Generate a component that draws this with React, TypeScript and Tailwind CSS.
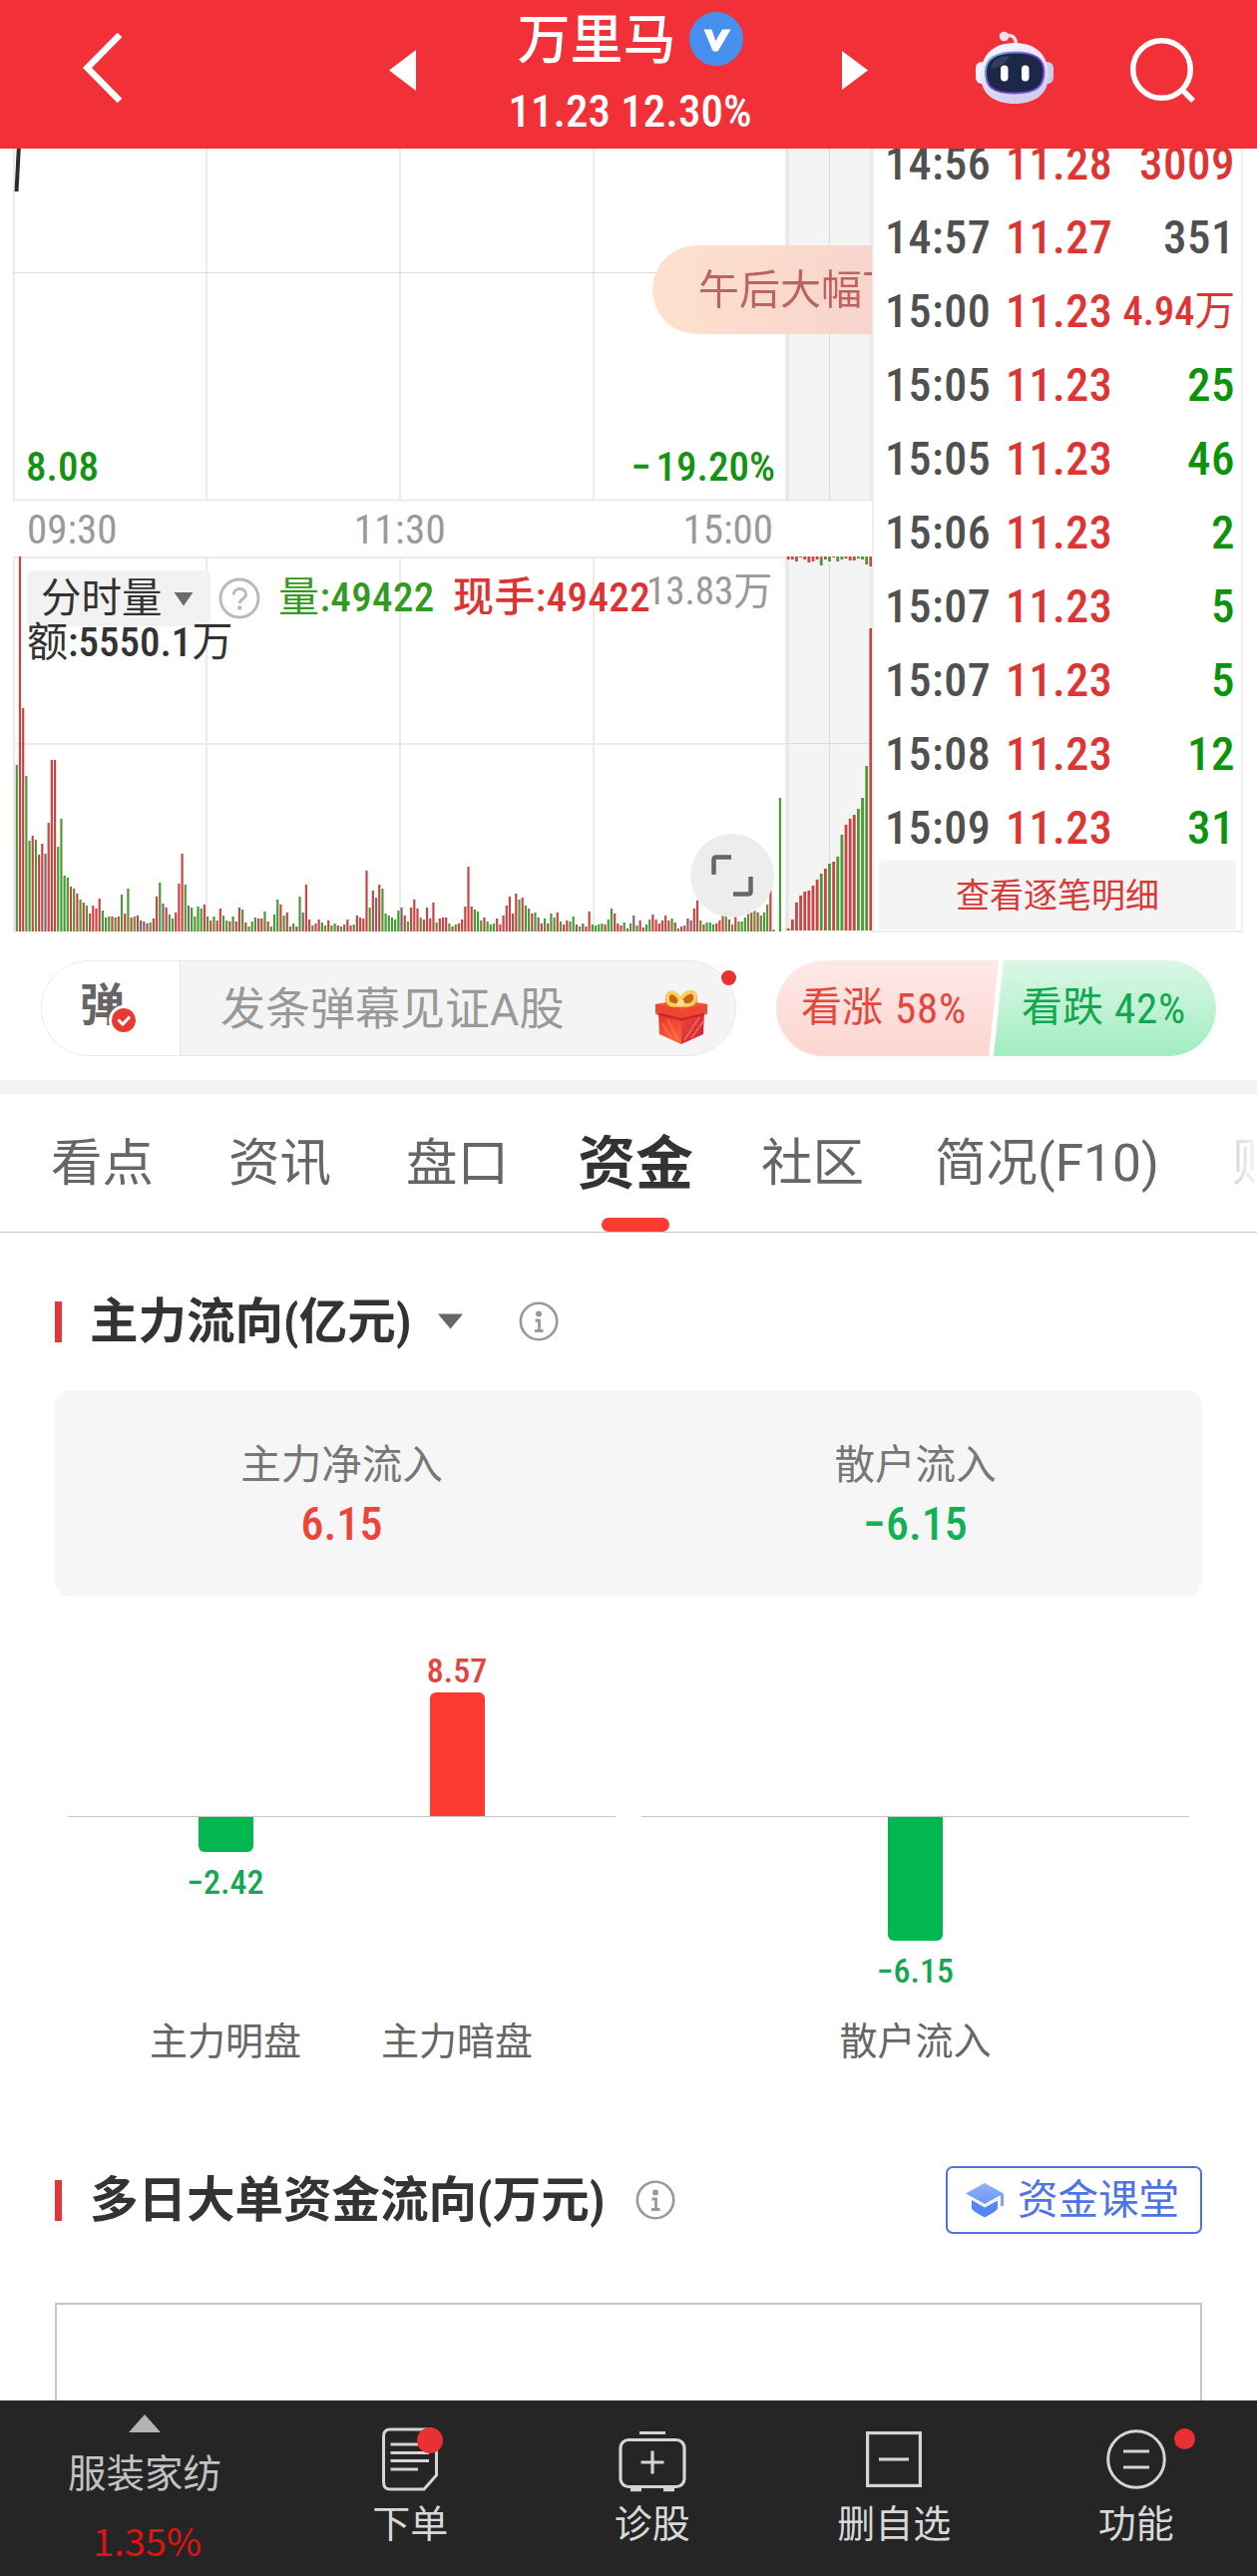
import type { ReactNode } from "react";

type Trade = { time: string; price: string; volume: string; tone: "up" | "down" | "flat" };

const trades: Trade[] = [
  { time: "14:56", price: "11.28", volume: "3009", tone: "up" },
  { time: "14:57", price: "11.27", volume: "351", tone: "flat" },
  { time: "15:00", price: "11.23", volume: "4.94万", tone: "up" },
  { time: "15:05", price: "11.23", volume: "25", tone: "down" },
  { time: "15:05", price: "11.23", volume: "46", tone: "down" },
  { time: "15:06", price: "11.23", volume: "2", tone: "down" },
  { time: "15:07", price: "11.23", volume: "5", tone: "down" },
  { time: "15:07", price: "11.23", volume: "5", tone: "down" },
  { time: "15:08", price: "11.23", volume: "12", tone: "down" },
  { time: "15:09", price: "11.23", volume: "31", tone: "down" },
];

// Per-minute volume: colour key (r = rise, g = fall, k = unchanged) and bar height.
const minuteVolume = `g167 r376 r224 g156 g91 r96 g92 r77 r88 k78 r109 r172 r172 g85 g113 g56 g54 r45 g43 r38 g32 r29 g26 r18 r26 r23 r33 g21 g14 g15
r15 g14 r15 g37 r18 g43 r14 g15 r16 k11 k10 r8 g9 r13 r35 g49 k28 r24 g17 g13 r19 r48 r78 g47 k26 g24 g15 g25 g23 r27
g15 r11 g15 r11 r23 g16 g11 r10 g15 r10 r24 g22 r9 g5 g10 g14 r13 r13 g20 r10 g5 g17 g32 r27 g16 r19 k5 g8 r5 g35
k19 r47 r12 g6 r8 r12 g9 g6 r11 g6 g8 r6 g5 k7 r12 r6 g7 r16 r14 r13 r61 g24 r41 k34 r47 g43 g18 g16 g14 g12
g21 k24 r16 g10 r24 r32 r23 g14 r12 r24 r13 r29 g9 r13 r14 r14 g8 r5 g7 r8 r12 r25 r65 r25 g22 g20 g11 r14 g10 g7
g8 r13 r7 r16 r26 r35 r18 r38 g32 r34 g26 g23 r18 g19 k14 r8 g13 r8 g18 g14 r19 g10 r7 r11 g10 g15 r7 g5 k8 r5
r20 g7 g6 g7 g8 r7 g12 g23 r18 r8 r6 g9 r3 g8 k16 g6 r11 r4 g7 g12 r17 r12 r8 r11 r16 r11 g13 r9 g3 r5
k6 r13 k11 r23 r31 g11 r7 g9 g9 g7 r8 r11 r17 g18 r12 g7 r15 g10 g10 g14 g22 r19 g21 r19 g16 g19 g27 r41 g2 g0 g134`
  .split(/\s+/)
  .map((bar) => ({ tone: bar[0], height: Number(bar.slice(1)) }));

const auctionVolume = "r2 r11 r28 r35 r39 r40 r45 r51 g57 r62 g67 r69 g74 g96 r106 r112 r116 g122 g133 g165 r303"
  .split(" ")
  .map((bar) => ({ tone: bar[0], height: Number(bar.slice(1)) }));

const auctionUnmatched = "r3 r3 r5 r1 r3 r6 r5 r3 g9 r3 g5 r1 g5 g3 r2 r4 r4 g2 g3 g8 r10"
  .split(" ")
  .map((bar) => ({ tone: bar[0], height: Number(bar.slice(1)) }));

const barFill: Record<string, string> = { r: "#cb4444", g: "#4a9a35", k: "#77696c" };

function ChartCanvas() {
  return (
    <svg className="absolute inset-0" width="874" height="786" viewBox="0 149 874 786">
      <rect x="788" y="149" width="86" height="352" fill="#f4f4f4" />
      <rect x="788" y="558" width="86" height="376" fill="#f4f4f4" />
      <g stroke="#ebebeb" strokeWidth="2">
        <path d="M14 149V502M207 149V502M401 149V502M595 149V502M873 149V502" />
        <path d="M13 501.5H874M13 559H788" />
        <path d="M14 558V934M207 558V934M401 558V934M595 558V934M873 558V934M13 746H788" />
      </g>
      <path d="M789 149V502M789 558V934" stroke="#e9e9e9" strokeWidth="4" />
      <path d="M13 273.5H874M788 745.5H874M831.5 149V501M831.5 558V934" stroke="#dcdcdc" strokeWidth="1.2" />
      <path d="M19 145L16.5 192" stroke="#2c2c2c" strokeWidth="4" />
      {minuteVolume.map((bar, i) => (
        <rect key={i} x={15.7 + i * 3.188} y={934 - bar.height} width="2.2" height={bar.height} fill={barFill[bar.tone]} />
      ))}
      {auctionVolume.map((bar, i) => (
        <rect key={i} x={788.8 + i * 4.13} y={933 - bar.height} width="2.8" height={bar.height} fill={barFill[bar.tone]} />
      ))}
      {auctionUnmatched.map((bar, i) => (
        <rect key={i} x={788.8 + i * 4.13} y={558} width="2.8" height={bar.height} fill={barFill[bar.tone]} />
      ))}
    </svg>
  );
}

function Header() {
  return (
    <header className="flex h-[149px] shrink-0 items-start bg-[#f13037] text-white">
      <svg className="mt-[30px] ml-[80px]" width="46" height="76" viewBox="80 30 46 76" fill="none">
        <path d="M120 35L87.5 68L120 101" stroke="#fff" strokeWidth="6.5" />
      </svg>
      <svg className="mt-[50px] ml-[264px]" width="27" height="41" viewBox="0 0 27 41">
        <path d="M0 20.5L27 0V41Z" fill="#fff" />
      </svg>
      <div className="ml-[93px] flex w-[243px] flex-col items-center">
        <div className="mt-[9px] flex h-[64px] items-center">
          <span className="text-[53px] leading-[64px] font-medium">万里马</span>
          <svg className="mb-[5px] ml-[13px]" width="54" height="54" viewBox="0 0 54 54">
            <circle cx="27" cy="27" r="27" fill="#4790ee" />
            <path d="M14.500 17.500L22.500 17.500L26.300 29L33 17.500H41.500L29.500 38C28.300 40.300 24 40.300 23 38Z" fill="#fff" />
          </svg>
        </div>
        <div className="mt-[17px] text-[45px] leading-[44px] font-medium whitespace-nowrap">11.23 12.30%</div>
      </div>
      <svg className="mt-[51px] ml-[91px]" width="26" height="39" viewBox="0 0 26 39">
        <path d="M26 19.500L0 0V39Z" fill="#fff" />
      </svg>
      <RobotIcon />
      <svg className="mt-[34px] ml-[74px]" width="74" height="74" viewBox="1130 34 74 74" fill="none" stroke="#fff" strokeWidth="5.5">
        <circle cx="1164.500" cy="69.500" r="28.800" />
        <path d="M1184 89L1196 101" />
      </svg>
    </header>
  );
}

function RobotIcon() {
  return (
    <svg className="mt-[28px] ml-[104px]" width="82" height="80" viewBox="974 28 82 80">
      <defs>
        <linearGradient id="shell" x1="0" y1="0" x2="0.4" y2="1">
          <stop offset="0" stopColor="#fdfcff" />
          <stop offset="0.55" stopColor="#e6e2f8" />
          <stop offset="1" stopColor="#d3cdf0" />
        </linearGradient>
        <linearGradient id="rim" x1="0" y1="0" x2="1" y2="1">
          <stop offset="0" stopColor="#6bd5e8" />
          <stop offset="0.45" stopColor="#7a3cd8" />
          <stop offset="1" stopColor="#6c63e8" />
        </linearGradient>
      </defs>
      <path d="M1007 36Q1018 33 1018.500 45" stroke="#f3dbe8" strokeWidth="3.500" fill="none" />
      <circle cx="1006.500" cy="36.500" r="4.800" fill="#f7dfe8" />
      <rect x="978" y="62" width="12" height="22" rx="6" fill="#f1effb" />
      <rect x="1044" y="62" width="12" height="22" rx="6" fill="#cbc9ee" />
      <path d="M1017 43C1040 43 1051 57 1051 75C1051 95 1037 104 1017 104C997 104 983 95 983 75C983 57 994 43 1017 43Z" fill="url(#shell)" />
      <path d="M1017 52.500C1038 52.500 1046.500 59 1046.500 72C1046.500 86 1040 93.500 1017 93.500C994 93.500 988 86 988 72C988 59 997 52.500 1017 52.500Z" fill="#1d2748" stroke="url(#rim)" strokeWidth="2" />
      <path d="M993 69C995 59 1002 56 1012 56C1007 66 1001 67 993 69Z" fill="#3b4563" opacity="0.8" />
      <rect x="1003" y="65.500" width="7.500" height="16" rx="3.700" fill="#fff" />
      <rect x="1024" y="65.500" width="7.500" height="16" rx="3.700" fill="#fff" />
    </svg>
  );
}

function TradeRow({ trade }: { trade: Trade }) {
  const tone = trade.tone === "up" ? "text-[#dd3534]" : trade.tone === "down" ? "text-[#0b930b]" : "text-[#505050]";
  const size = trade.volume.endsWith("万") ? "text-[40.5px]" : "text-[47px] tracking-[0.5px]";
  return (
    <div className="flex h-[74px] items-center text-[46px] font-medium tracking-[0.5px]">
      <span className="w-[121px] text-[#505050]">{trade.time}</span>
      <span className="w-[106px] text-[#dd3534]">{trade.price}</span>
      {trade.volume.endsWith("万") ? (
        <span className={`flex-1 text-right tracking-normal whitespace-nowrap ${size} ${tone}`}>
          {trade.volume.slice(0, -1)}
          <span className="font-normal">万</span>
        </span>
      ) : (
        <span className={`flex-1 text-right whitespace-nowrap ${size} ${tone}`}>{trade.volume}</span>
      )}
    </div>
  );
}

function MarketPanel() {
  return (
    <section className="flex h-[786px] shrink-0 overflow-hidden">
      <div className="relative flex h-[786px] w-[874px] shrink-0 flex-col overflow-hidden">
        <ChartCanvas />
        <div className="relative flex h-[352px] items-end justify-between pr-[97px] pb-[12px] pl-[26px] text-[41px] leading-[42px] font-medium text-[#149214]">
          <span>8.08</span>
          <span>
            <span className="mr-[5px]">−</span>19.20%
          </span>
          <div className="absolute top-[97px] left-[654px] flex h-[89px] w-[420px] items-center rounded-full bg-linear-to-r from-[#fee0cb] to-[#f3c8cb] pl-[46px] text-[41px] font-normal whitespace-nowrap text-[#b85c59] opacity-95">
            午后大幅下挫
          </div>
        </div>
        <div className="relative flex h-[57px] items-center justify-between pt-[3px] pr-[99px] pl-[27px] text-[41px] leading-[42px] text-[#999999]">
          <span>09:30</span>
          <span className="tracking-[0.4px]">11:30</span>
          <span>15:00</span>
        </div>
        <div className="relative flex-1 pt-[14px] pl-[27px] text-[41px] whitespace-nowrap text-[#333333]">
          <div className="flex h-[56px] items-center">
            <div className="flex h-[56px] w-[184px] items-center rounded-[6px] bg-[#f2f2f2] pl-[14px] text-[40.5px]">
              分时量
              <svg className="ml-[11px]" width="20" height="15" viewBox="0 0 20 15">
                <path d="M0.500 1H19.500L10 14.500Z" fill="#6b6b6b" />
              </svg>
            </div>
            <svg className="ml-[8px]" width="42" height="42" viewBox="0 0 42 42" fill="none">
              <circle cx="21" cy="21" r="19" stroke="#b9b9b9" strokeWidth="2.900" />
              <path d="M15 17.500C15 9.500 27.500 9.500 27.500 17C27.500 21.500 21.300 21.500 21.300 26" stroke="#b9b9b9" strokeWidth="2.900" />
              <circle cx="21.300" cy="30.500" r="2.200" fill="#b9b9b9" />
            </svg>
            <span className="ml-[18px] w-[175px] tracking-[0.4px] text-[#339a22]">
              量<span className="font-medium">:49422</span>
            </span>
            <span className="w-[194px] font-medium tracking-[0.4px] text-[#dd3333]">现手:49422</span>
            <span className="mb-[14px] text-[39px] text-[#999999]">13.83万</span>
          </div>
          <div className="mt-[-4px] leading-[40px]">
            额<span className="font-medium">:5550.1</span>万
          </div>
          <button className="absolute top-[278px] left-[692px] flex h-[84px] w-[84px] items-center justify-center rounded-full bg-[#ececec]/95">
            <svg width="42" height="42" viewBox="0 0 42 42" fill="none" stroke="#666666" strokeWidth="4.500">
              <path d="M2.500 20V5Q2.500 2.500 5 2.500H20" />
              <path d="M22 39.500H37Q39.500 39.500 39.500 37V22" />
            </svg>
          </button>
        </div>
      </div>
      <div className="flex w-[372px] shrink-0 flex-col border-r-2 border-b-2 border-l-2 border-[#efefef] pl-[11px]">
        <div className="mt-[-22px] pr-[6px]">
          {trades.map((trade, i) => (
            <TradeRow key={i} trade={trade} />
          ))}
        </div>
        <button className="mt-[-4px] ml-[-6px] h-[69px] w-[358px] bg-[#f4f4f4] pt-[1px] text-[34px] text-[#d83a38]">查看逐笔明细</button>
      </div>
    </section>
  );
}

function GiftIcon() {
  return (
    <svg width="56" height="60" viewBox="0 0 56 60">
      <defs>
        <linearGradient id="giftLeft" x1="0" y1="0" x2="0.3" y2="1">
          <stop offset="0" stopColor="#e23325" />
          <stop offset="1" stopColor="#f9603c" />
        </linearGradient>
        <linearGradient id="giftRight" x1="0" y1="0" x2="1" y2="1">
          <stop offset="0" stopColor="#ee4a34" />
          <stop offset="1" stopColor="#cc1c40" />
        </linearGradient>
      </defs>
      <path d="M5 26H28V58L6 48Z" fill="url(#giftLeft)" />
      <path d="M28 26H51L50 48L28 58Z" fill="url(#giftRight)" />
      <path d="M31 54L46 31M38 52L50 35M9 37L19 54M14 33L25 54" stroke="#f9744f" strokeWidth="1.800" opacity="0.75" />
      <path d="M2 18L28 14L54 18V26L28 32L2 26Z" fill="#ee4630" />
      <path d="M2 18L28 14L54 18L28 23Z" fill="#f5583e" />
      <path d="M2 26L28 32L54 26V28L28 34.500L2 28Z" fill="#b91e24" opacity="0.7" />
      <path d="M27 19C20 22 12 21 12 13C12 3 22 2 27 13C31 3 44 1 44 12C44 20 36 22 27 19Z" fill="#c9631a" />
      <path d="M27 18C20 20 14 19 14 12C14 4 22 4 27 14C32 4 42 3 42 11C42 19 34 20 27 18Z" fill="none" stroke="#ffd05f" strokeWidth="3.800" />
      <circle cx="27.500" cy="17" r="3.800" fill="#ffe08a" />
    </svg>
  );
}

function DanmuBar() {
  return (
    <section className="flex h-[148px] shrink-0 items-start pt-[28px]">
      <div className="relative ml-[41px] flex h-[96px] w-[697px] items-center rounded-full border border-[#e8e8e8] bg-[#f4f4f4]">
        <div className="relative flex h-[94px] w-[139px] items-center rounded-l-full border-r border-[#e8e8e8] bg-white pl-[38px] text-[45px] font-bold text-[#666666]">
          <span className="mb-[4px] leading-[46px]">弹</span>
          <svg className="absolute top-[44px] left-[67px]" width="30" height="30" viewBox="0 0 30 30" fill="none">
            <circle cx="15" cy="15" r="15" fill="#fff" />
            <circle cx="15" cy="15" r="12" fill="#e83a33" />
            <path d="M9.500 14.500L14 19L21 11.500" stroke="#fff" strokeWidth="3" />
          </svg>
        </div>
        <span className="ml-[40px] pt-[3px] text-[45px] text-[#999999]">
          发条弹幕见证<span className="font-['Roboto']">A</span>股
        </span>
        <div className="mt-[16px] ml-auto pr-[26px]">
          <GiftIcon />
        </div>
        <span className="absolute top-[9px] right-[-1px] h-[15px] w-[15px] rounded-full bg-[#e63131]" />
      </div>
      <div className="ml-[40px] flex h-[96px] w-[441px] overflow-hidden rounded-full text-[41px] whitespace-nowrap">
        <div className="flex h-[96px] w-[223px] items-center bg-linear-to-b from-[#fee9e7] to-[#fdd5d1] pl-[25px] text-[#e3473e] [clip-path:polygon(0_0,100%_0,213px_100%,0_100%)]">
          看涨<span className="ml-[12px] text-[43px] tracking-[0.8px]">58%</span>
        </div>
        <div className="ml-[-5px] flex h-[96px] flex-1 items-center bg-linear-to-b from-[#daf8e6] to-[#a1ecc0] pl-[28px] text-[#12a850] [clip-path:polygon(10px_0,100%_0,100%_100%,0_100%)]">
          看跌<span className="ml-[11px] text-[43px] tracking-[0.8px]">42%</span>
        </div>
      </div>
    </section>
  );
}

function Tabs() {
  return (
    <nav className="flex h-[139px] shrink-0 overflow-hidden border-b border-[#c6c6c6] pt-[40px] pl-[51px] text-[51.5px] leading-[60px] whitespace-nowrap text-[#666666]">
      <span className="w-[178px] shrink-0">看点</span>
      <span className="w-[178px] shrink-0">资讯</span>
      <span className="w-[172px] shrink-0">盘口</span>
      <span className="flex w-[184px] shrink-0 flex-col text-[58px] font-bold text-[#333333]">
        资金
        <span className="mt-auto ml-[24px] h-[14px] w-[68px] rounded-full bg-[#fa3c32]" />
      </span>
      <span className="w-[174px] shrink-0">社区</span>
      <span className="w-[298px] shrink-0">
        简况<span className="font-['Roboto']">(F10)</span>
      </span>
      <span className="shrink-0 bg-linear-to-r from-[#d4d4d4] from-0% to-white to-30% bg-clip-text text-transparent">财务</span>
    </nav>
  );
}

function InfoIcon() {
  return (
    <svg width="40" height="40" viewBox="0 0 40 40" fill="none">
      <circle cx="20" cy="20" r="18.200" stroke="#999999" strokeWidth="2.600" />
      <circle cx="20" cy="12.500" r="3" fill="#999999" />
      <path d="M16.500 19H20.500V29M16 29.500H24.500" stroke="#999999" strokeWidth="2.800" />
    </svg>
  );
}

function SectionTitle({ children }: { children: ReactNode }) {
  return (
    <>
      <span className="h-[41px] w-[7px] bg-[#e23637]" />
      <h2 className="ml-[28px] pt-[2px] text-[48.5px] font-bold whitespace-nowrap text-[#333333]">{children}</h2>
    </>
  );
}

function FlowSummary() {
  return (
    <div className="mx-[55px] mt-[35px] flex h-[207px] shrink-0 rounded-[16px] bg-[#f6f6f6] text-center">
      <div className="flex-1 pt-[54px]">
        <div className="text-[40.5px] leading-[42px] text-[#777777]">主力净流入</div>
        <div className="mt-[15px] text-[46px] leading-[46px] font-medium text-[#ee4338]">6.15</div>
      </div>
      <div className="flex-1 pt-[54px]">
        <div className="text-[40.5px] leading-[42px] text-[#777777]">散户流入</div>
        <div className="mt-[15px] text-[46px] leading-[46px] font-medium text-[#12b155]">−6.15</div>
      </div>
    </div>
  );
}

function FlowBars() {
  return (
    <div className="flex shrink-0 gap-[26px] pl-[68px] text-[34px] leading-[36px] font-medium">
      <div className="w-[549px]">
        <div className="flex h-[221px] items-end border-b border-[#c6c6c6] pl-[274px]">
          <div className="flex w-[232px] flex-col items-center">
            <span className="text-[#e2453c]">8.57</span>
            <span className="mt-[4px] h-[124px] w-[55px] rounded-t-[6px] bg-[#fb3b31]" />
          </div>
        </div>
        <div className="flex h-[200px] items-start pl-[42px]">
          <div className="flex w-[232px] flex-col items-center">
            <span className="h-[35px] w-[55px] rounded-b-[6px] bg-[#02b650]" />
            <span className="mt-[12px] text-[#17a653]">−2.42</span>
          </div>
        </div>
        <div className="flex pt-[1px] pl-[42px] text-center text-[38px] leading-[48px] font-normal text-[#666666]">
          <span className="w-[232px]">主力明盘</span>
          <span className="w-[232px]">主力暗盘</span>
        </div>
      </div>
      <div className="w-[549px]">
        <div className="h-[221px] border-b border-[#c6c6c6]" />
        <div className="flex h-[200px] flex-col items-center">
          <span className="h-[124px] w-[55px] rounded-b-[6px] bg-[#02b650]" />
          <span className="mt-[12px] text-[#17a653]">−6.15</span>
        </div>
        <div className="pt-[1px] text-center text-[38px] leading-[48px] font-normal text-[#666666]">散户流入</div>
      </div>
    </div>
  );
}

function CapIcon() {
  return (
    <svg width="38" height="36" viewBox="0 0 38 36">
      <defs>
        <linearGradient id="cap" x1="0" y1="0" x2="0" y2="1">
          <stop offset="0" stopColor="#8fb0fb" />
          <stop offset="1" stopColor="#6d98f8" />
        </linearGradient>
      </defs>
      <path d="M6 16.500L19 23.500L32 16.500V27C28 31 23 33 19 35.500C15 33 10 31 6 27Z" fill="#5586f6" />
      <path d="M0 11.500L19 1L38 11.500L19 22Z" fill="url(#cap)" />
      <path d="M6 17L19 24.500L34 16.500" fill="none" stroke="#ffffff" strokeWidth="1.600" />
      <path d="M35 12H38V24H35Z" fill="#7ba1f9" />
    </svg>
  );
}

function NavItem({ icon, label, dot }: { icon: ReactNode; label: string; dot?: ReactNode }) {
  return (
    <div className="relative flex w-[242.500px] flex-col items-center pt-[25px]">
      {icon}
      {dot}
      <span className="mt-[9px] text-[38px] leading-[44px]">{label}</span>
    </div>
  );
}

function BottomNav() {
  return (
    <footer className="flex h-[176px] shrink-0 bg-[#252525] text-[#d8d8d8]">
      <div className="flex w-[290px] flex-col items-center pt-[14px]">
        <svg width="32" height="18" viewBox="0 0 32 18">
          <path d="M16 0L32 18H0Z" fill="#b3b3b3" />
        </svg>
        <span className="mt-[19px] text-[38.500px] leading-[46px] text-[#c2c2c2]">服装家纺</span>
        <span className="mt-[20px] pl-[5px] font-['Noto_Sans_CJK_SC'] text-[38px] leading-[46px] text-[#e01212]">1.35%</span>
      </div>
      <NavItem
        label="下单"
        icon={
          <svg width="58" height="68" viewBox="0 0 58 68" fill="none" stroke="#d4d4d4" strokeWidth="3">
            <path d="M9 4H49Q55.500 4 55.500 11V50L43 64H9Q2.500 64 2.500 57V11Q2.500 4 9 4Z" />
            <path d="M9.500 19H48M9.500 27.500H48M9.500 35.500H48M9.500 44H37" />
          </svg>
        }
        dot={<span className="absolute top-[27px] left-[128px] h-[26px] w-[26px] rounded-full bg-[#e93133]" />}
      />
      <NavItem
        label="诊股"
        icon={
          <svg width="68" height="68" viewBox="0 0 68 68" fill="none" stroke="#d4d4d4" strokeWidth="3.200">
            <rect x="2" y="14.500" width="64" height="47" rx="8" />
            <path d="M21 7.500H47M34 25.500V48.500M22.500 37H45.500" />
            <path d="M12 64H23M45 64H56" strokeWidth="4.500" />
          </svg>
        }
      />
      <NavItem
        label="删自选"
        icon={
          <svg width="58" height="68" viewBox="0 0 58 68" fill="none" stroke="#d4d4d4" strokeWidth="3.200">
            <rect x="2.600" y="7.600" width="52.800" height="52.800" />
            <path d="M14 34H44" />
          </svg>
        }
      />
      <NavItem
        label="功能"
        icon={
          <svg width="62" height="68" viewBox="0 0 62 68" fill="none" stroke="#d4d4d4" strokeWidth="3">
            <circle cx="31" cy="34" r="28.300" />
            <path d="M18 26H44M18 42H44" />
          </svg>
        }
        dot={<span className="absolute top-[28px] left-[159px] h-[21px] w-[21px] rounded-full bg-[#e93133]" />}
      />
    </footer>
  );
}

export default function App() {
  return (
    <div className="flex h-[2583px] w-[1260px] flex-col overflow-hidden bg-white font-['Roboto_Condensed','Noto_Sans_CJK_SC',sans-serif]">
      <Header />
      <MarketPanel />
      <DanmuBar />
      <div className="h-[14px] shrink-0 bg-[#f4f4f4]" />
      <Tabs />
      <div className="mt-[55px] flex h-[68px] shrink-0 items-center pl-[55px]">
        <SectionTitle>主力流向(亿元)</SectionTitle>
        <svg className="ml-[27px]" width="25" height="16" viewBox="0 0 25 16">
          <path d="M0 0.500H25L12.500 15.500Z" fill="#666666" />
        </svg>
        <span className="ml-[56px]">
          <InfoIcon />
        </span>
      </div>
      <FlowSummary />
      <FlowBars />
      <div className="mt-[101px] flex h-[68px] shrink-0 items-center pr-[55px] pl-[55px]">
        <SectionTitle>多日大单资金流向(万元)</SectionTitle>
        <span className="ml-[31px]">
          <InfoIcon />
        </span>
        <button className="ml-auto flex h-[68px] w-[257px] items-center rounded-[7px] border-2 border-[#4d73e2] pl-[18px] text-[40.5px] whitespace-nowrap text-[#4e74e4]">
          <CapIcon />
          <span className="ml-[14px]">资金课堂</span>
        </button>
      </div>
      <div className="mx-[55px] mt-[69px] flex-1 border-2 border-b-0 border-[#c6c6c6]" />
      <BottomNav />
    </div>
  );
}
